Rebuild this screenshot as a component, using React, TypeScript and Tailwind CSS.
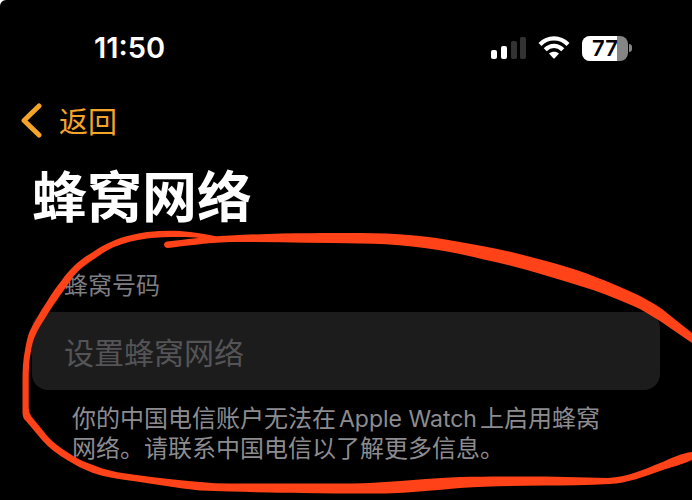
import React from 'react';

const SignalIcon: React.FC = () => (
  <svg width="36" height="24" viewBox="0 0 36 24" aria-label="Signal" role="img">
    <rect x="1" y="14" width="6" height="9" rx="2" fill="#fff" />
    <rect x="11" y="10" width="6" height="13" rx="2" fill="#fff" />
    <rect x="21" y="5" width="6" height="18" rx="2" fill="#333" />
    <rect x="30" y="1" width="6" height="22" rx="2" fill="#333" />
  </svg>
);

const WifiIcon: React.FC = () => (
  <svg width="32" height="24" viewBox="0 0 32 24" aria-label="Wi-Fi" role="img">
    <g fill="none" stroke="#fff" strokeWidth="4.200">
      <path d="M2 8.4C10 .4 22 .4 30 8.4" />
      <path d="M7.2 13.8C12.4 8.6 19.6 8.6 24.8 13.8" />
    </g>
    <path d="M11 17.6C14 15 18 15 21 17.6L16.7 22.2Q16 22.800 15.3 22.2Z" fill="#fff" />
  </svg>
);

const Battery: React.FC<{ level: number }> = ({ level }) => (
  <div className="flex items-center gap-px">
    <div className="relative h-[25px] w-[46px] overflow-hidden rounded-lg bg-[#858585]">
      <div className="h-full bg-white" style={{ width: `${level}%` }} />
      <span className="absolute inset-0 text-center font-['Inter',sans-serif] text-[22px] leading-[25px] font-semibold text-black">
        {level}
      </span>
    </div>
    <div className="h-2 w-[3px] rounded-r-full bg-[#858585]" />
  </div>
);

// Freehand marker loop around the cellular section
const MarkerLoop: React.FC = () => (
  <svg
    className="pointer-events-none absolute top-0 left-0"
    width="692"
    height="500"
    viewBox="0 0 692 500"
    fill="#ff4217"
    aria-hidden="true"
  >
    <path d="M167 241.500C185 239.500 205 237 230 235.500C275 233 320 233 360 233C395 233 430 236 460 242C482 246 505 250 527 256C550 262 573 268 593 276C610 282 625 289 640 296C649 301 655 304 662 309L692 333L700 339V349L692 343L660 321C653 317 647 313 640 309C625 302 610 296 593 290C572 283 550 277 527 270C505 264 482 259 460 254C430 248 395 243.500 360 243.500C315 243 270 242 230 242C205 243 185 246 168 248C163 248 163 242 167 241.500Z" />
    <path d="M217 241C211 239 205 238.500 200 238C193 237 187 237 180 237C168 237 157 237 147 238.500C135 240 124 243 114 247C108 250 104 252 100 255C94 259 88 263 83 267C78 271 74 275 71 280C66 287 61 294 57 300C52 307 48 313 44 320C41 325 38 329 36 334C33 340 32 345 31 351C29 361 28.700 370 28.700 380V408Q28.700 412 31 416L44 432C51 441 59 447 67 452C76 458 84 462 93 465C105 470 119 473 133 474.500C155 478 178 480 200 482C210 483 220 483.500 230 483.500H340C356 483.500 370 483 385 482C410 480.500 435 478 460 477C490 476 518 476.500 545 476.500L608 478C627 477 643 470 660 463C672 458 682 453 692 452L700 447V456L692 460C681 465 672 467 660 471C643 477 627 483 610 484C588 485.500 566 485.500 545 485.500C517 486 489 486 460 488C435 490 410 493 385 493.500C330 493.500 280 493 230 491.500L200 490.500C177 488 155 484 133 481C118 479 105 477 93 473C83 469 75 465 67 460C57 454 49 448 42 440L26 421Q22.500 418 22.500 413V380C22.500 369 23 360 25 350C26 344 27 339 29 333C31 328 34 323 37 318C40 312 44 306 48 300C52 293 57 286 62 280C65 275 69 271 73 267C79 261 86 256 93 252C100 247 106 244 113 241C124 236 135 234 147 232C158 231 169 230.500 180 231C194 232 206 234 217 236.500Z" />
  </svg>
);

const App: React.FC = () => {
  return (
    <div className="bg-white">
      <div className="relative min-h-screen overflow-hidden rounded-tl-md bg-black font-['Noto_Sans_CJK_SC',sans-serif]">
        <header className="flex items-center justify-between pt-[34px] pr-[60px] pl-[94px]">
          <time className="font-['Inter',sans-serif] text-[29px] leading-7 font-semibold text-white">11:50</time>
          <div className="flex items-center gap-3">
            <SignalIcon />
            <WifiIcon />
            <Battery level={77} />
          </div>
        </header>

        <nav className="px-5 pt-10">
          <button type="button" className="flex items-center gap-4 text-[29px] leading-9 text-[#f5a42a]">
            <svg width="23" height="36" viewBox="0 0 23 36" fill="none" stroke="currentColor" strokeWidth="5" strokeLinecap="round" strokeLinejoin="round" aria-hidden="true">
              <path d="M19 4L4 18.500L19 33" />
            </svg>
            返回
          </button>
        </nav>

        <main className="px-8">
          <h1 className="pt-6 text-[55px] leading-[62px] font-bold text-white">蜂窝网络</h1>

          <section aria-labelledby="number-title" className="pt-[42px]">
            <h2 id="number-title" className="px-8 text-2xl leading-9 text-[#7e7e82]">蜂窝号码</h2>
            <button
              type="button"
              disabled
              className="mt-2.5 block h-[78px] w-full rounded-2xl bg-[#1c1c1d] px-8 text-left text-[30px] text-[#545456]"
            >
              设置蜂窝网络
            </button>
            <p className="px-10 pt-3.5 font-['Inter','Noto_Sans_CJK_SC',sans-serif] text-2xl leading-[30px] text-[#8c8c90]">
              你的中国电信账户无法在<span className="mx-[3px] text-[23px] leading-none">Apple Watch</span>上启用蜂窝
              <br />
              网络。请联系中国电信以了解更多信息。
            </p>
          </section>
        </main>

        <MarkerLoop />
      </div>
    </div>
  );
};

export default App;
